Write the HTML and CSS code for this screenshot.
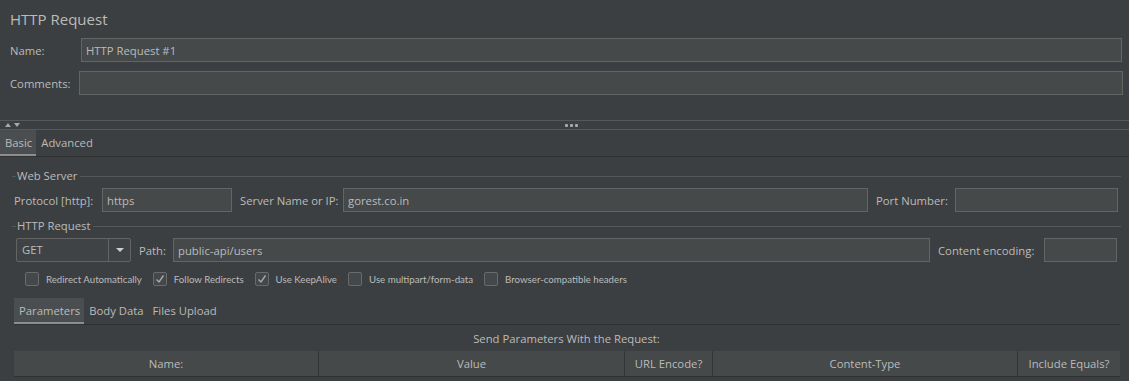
FILE: index.html
```html
<!DOCTYPE html>
<html lang="en">

<head>
    <meta charset="UTF-8">
    <title>HTTP Request</title>
    <link rel="stylesheet" href="styles.css">
</head>

<body>
    <div class="title">HTTP Request</div>

    <div class="form-row">
        <label class="name-label">Name:</label>
        <input type="text" value="HTTP Request #1">
    </div>
    <div class="form-row comments">
        <label class="comments-label">Comments:</label>
        <input type="text">
    </div>

    <div class="splitter">
        <div class="arrows"><span class="up"></span><span class="down"></span></div>
        <div class="dots"><span></span><span></span><span></span></div>
    </div>

    <div class="tabs">
        <div class="tab selected">Basic</div>
        <div class="tab">Advanced</div>
    </div>

    <div class="group-title">Web Server</div>
    <div class="server-row">
        <label>Protocol [http]:</label>
        <input type="text" value="https">
        <label class="pad">Server Name or IP:</label>
        <input type="text" value="gorest.co.in">
        <label class="pad">Port Number:</label>
        <input type="text">
    </div>

    <div class="group-title">HTTP Request</div>
    <div class="request-row">
        <div class="combo">
            <span class="combo-value">GET</span>
            <span class="combo-btn"><span class="caret"></span></span>
        </div>
        <label class="pad">Path:</label>
        <input type="text" value="public-api/users">
        <label class="pad">Content encoding:</label>
        <input type="text">
    </div>

    <div class="checks">
        <div class="check"><span class="box"></span>Redirect Automatically</div>
        <div class="check"><span class="box checked"><svg width="12" height="12" viewBox="0 0 12 12"><polyline points="2.5,6.5 5,9 9.5,2.5" fill="none" stroke="#a9a9a9" stroke-width="1.4"/></svg></span>Follow Redirects</div>
        <div class="check"><span class="box checked"><svg width="12" height="12" viewBox="0 0 12 12"><polyline points="2.5,6.5 5,9 9.5,2.5" fill="none" stroke="#a9a9a9" stroke-width="1.4"/></svg></span>Use KeepAlive</div>
        <div class="check"><span class="box"></span>Use multipart/form-data</div>
        <div class="check"><span class="box"></span>Browser-compatible headers</div>
    </div>

    <div class="sub-tabs">
        <div class="tab selected">Parameters</div>
        <div class="tab">Body Data</div>
        <div class="tab">Files Upload</div>
    </div>

    <div class="params-caption">Send Parameters With the Request:</div>

    <div class="table-head">
        <div class="col">Name:</div>
        <div class="col">Value</div>
        <div class="col">URL Encode?</div>
        <div class="col">Content-Type</div>
        <div class="col">Include Equals?</div>
    </div>
</body>

</html>
```

FILE: styles.css
```css
* {
    margin: 0;
    padding: 0;
    box-sizing: border-box;
}

body {
    font-family: "Open Sans", "Noto Sans", sans-serif;
    font-size: 11.3px;
    color: #bbbbbb;
    background-color: #3c3f41;
    overflow: hidden;
}

input {
    font-family: inherit;
    font-size: 11.3px;
    color: #bbbbbb;
    background-color: #45494a;
    border: 1px solid #646464;
    height: 24px;
    padding: 0 4px;
    outline: none;
    min-width: 0;
}

label {
    white-space: nowrap;
}

.title {
    font-size: 15px;
    line-height: 18px;
    height: 18px;
    margin: 10px 0 0 10px;
}

.form-row {
    display: flex;
    align-items: center;
    margin-top: 10px;
    padding-right: 7px;
}

.form-row input {
    flex: 1;
}

.form-row.comments {
    margin-top: 9px;
    padding-right: 6px;
}

.name-label {
    width: 81px;
    padding-left: 10px;
}

.comments-label {
    width: 79px;
    padding-left: 10px;
}

.splitter {
    margin-top: 25px;
    height: 10px;
    border-top: 1px solid #56595b;
    border-bottom: 1px solid #56595b;
    display: flex;
    align-items: center;
}

.arrows {
    display: flex;
    gap: 3px;
    padding-left: 5px;
}

.arrows span {
    width: 0;
    height: 0;
    border-left: 3px solid transparent;
    border-right: 3px solid transparent;
}

.arrows .up {
    border-bottom: 4px solid #a8a8a8;
}

.arrows .down {
    border-top: 4px solid #a8a8a8;
}

.dots {
    display: flex;
    gap: 2px;
    margin-left: 545px;
}

.dots span {
    width: 3px;
    height: 3px;
    border-radius: 1px;
    background-color: #a9a9a9;
}

.tabs {
    display: flex;
    height: 27px;
    border-bottom: 1px solid #2f3133;
}

.tab {
    padding: 0 4px 0 5px;
    line-height: 25px;
    height: 26px;
}

.tab.selected {
    background-color: #4a4e50;
    border-bottom: 2px solid #8a8c8e;
}

.group-title {
    display: flex;
    align-items: center;
    height: 14px;
    line-height: 14px;
    padding: 0 8px 0 12px;
}

.group-title::before {
    content: "";
    width: 4px;
    height: 1px;
    margin-right: 1px;
    background-color: #555859;
}

.group-title::after {
    content: "";
    flex: 1;
    height: 1px;
    margin-left: 3px;
    background-color: #555859;
}

.tabs + .group-title {
    margin-top: 12px;
}

.server-row {
    display: grid;
    grid-template-columns: 88px 130px 111px 1fr 87px 163px;
    align-items: center;
    margin-top: 5px;
    padding: 0 11px 0 14px;
}

.pad {
    padding-left: 8px;
}

.server-row + .group-title {
    margin-top: 7px;
}

.request-row {
    display: grid;
    grid-template-columns: 115px 42px 1fr 114px 73px;
    align-items: center;
    margin-top: 5px;
    padding: 0 12px 0 16px;
}

.combo {
    display: flex;
    height: 24px;
    border: 1px solid #646464;
    border-radius: 2px;
    background-color: #3f4345;
}

.combo-value {
    flex: 1;
    line-height: 22px;
    padding-left: 5px;
}

.combo-btn {
    width: 22px;
    border-left: 1px solid #646464;
    display: flex;
    align-items: center;
    justify-content: center;
}

.caret {
    width: 0;
    height: 0;
    border-left: 4px solid transparent;
    border-right: 4px solid transparent;
    border-top: 4px solid #cfcfcf;
}

.checks {
    display: flex;
    align-items: center;
    height: 14px;
    margin-top: 10px;
    padding-left: 25px;
    font-family: Lato, "Open Sans", sans-serif;
    font-size: 9.7px;
    gap: 11px;
}

.check {
    display: flex;
    align-items: center;
    white-space: nowrap;
}

.box {
    width: 14px;
    height: 14px;
    border: 1px solid #6a6a6a;
    border-radius: 2px;
    background-color: #43494a;
    margin-right: 7px;
    display: flex;
    align-items: center;
    justify-content: center;
}

.sub-tabs {
    display: flex;
    margin: 12px 9px 0 14px;
    height: 27px;
    border-bottom: 1px solid #2f3133;
}

.params-caption {
    text-align: center;
    margin-top: 5px;
    line-height: 18px;
    padding-left: 4px;
}

.table-head {
    display: grid;
    grid-template-columns: 305px 306px 88px 305px 1fr;
    margin: 3px 9px 0 14px;
    height: 26px;
    background-color: #45494a;
    border-bottom: 1px solid #2f3133;
}

.col {
    text-align: center;
    line-height: 25px;
    border-right: 1px solid #333537;
}

.col:last-child {
    border-right: none;
}
```
